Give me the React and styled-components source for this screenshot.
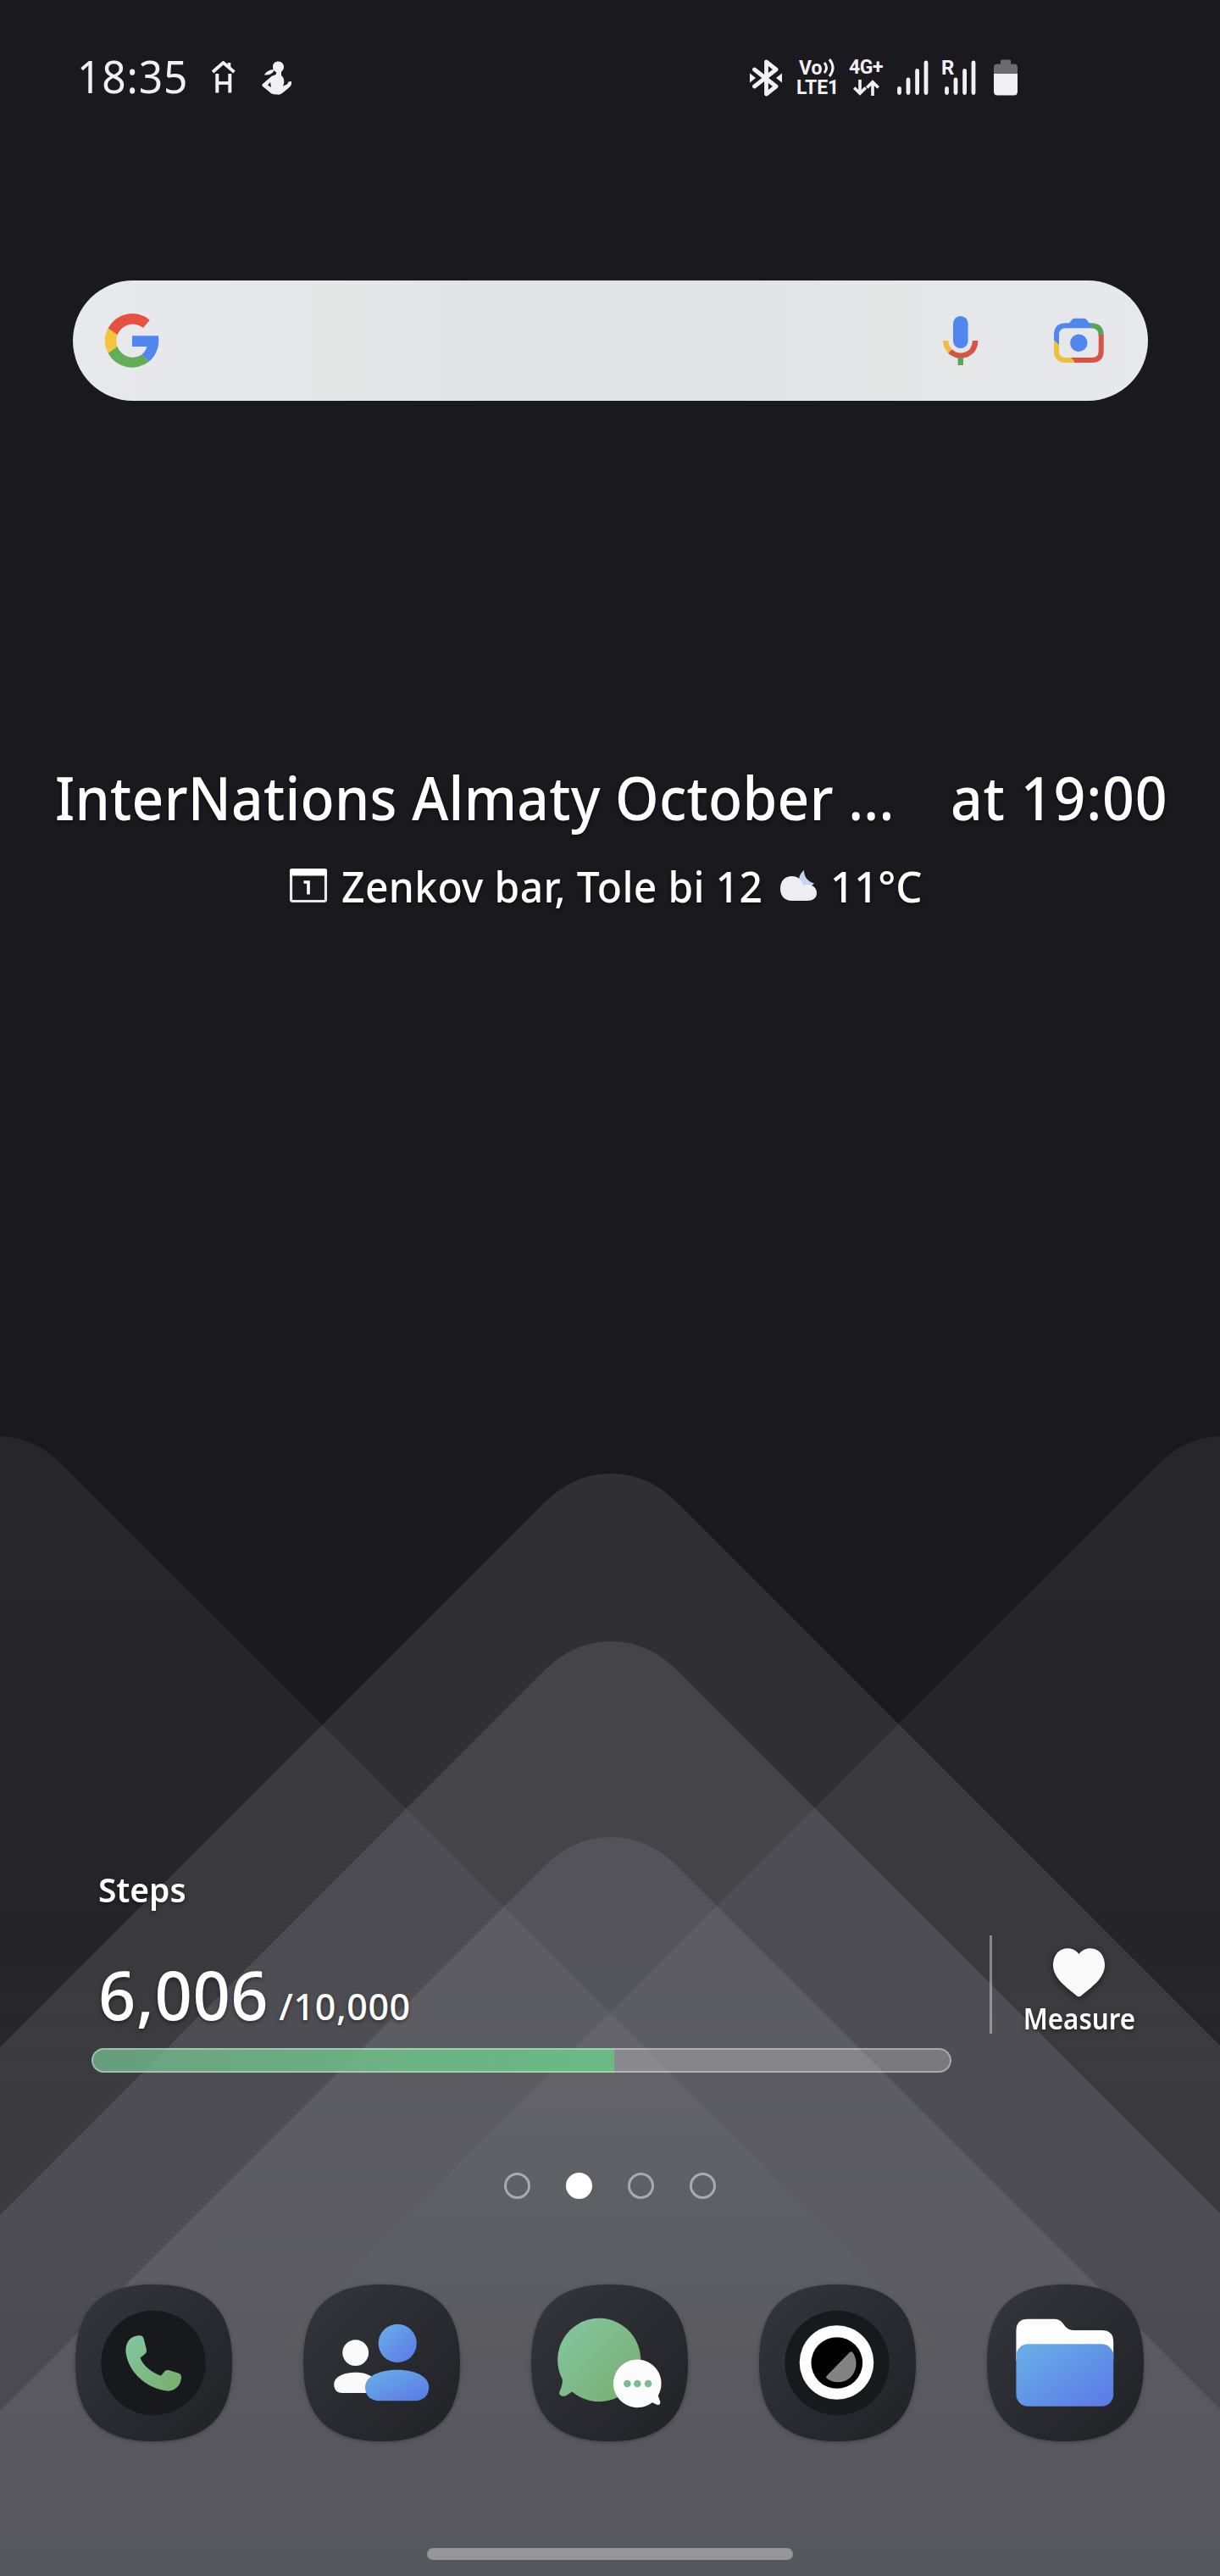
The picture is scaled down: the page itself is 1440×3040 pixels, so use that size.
import React from "react";
import styled, { createGlobalStyle } from "styled-components";

const GlobalStyle = createGlobalStyle`
  html, body { margin: 0; padding: 0; background: #19191e; }
  * { box-sizing: border-box; }
  svg { display: block; flex: none; }
`;

const Screen = styled.main`
  position: relative;
  width: 1440px;
  height: 3040px;
  overflow: hidden;
  color: #fff;
  font-family: "Noto Sans", "Open Sans", sans-serif;
`;

const WallpaperArt = styled.svg`
  position: absolute;
  inset: 0;
  z-index: 0;
`;

const Content = styled.div`
  position: relative;
  z-index: 1;
  display: flex;
  flex-direction: column;
  height: 100%;
`;

const Label = styled.span`
  display: block;
  font-size: ${(p) => p.$size}px;
  font-weight: ${(p) => p.$weight || 500};
  letter-spacing: ${(p) => p.$track || 0}px;
  line-height: 1;
  white-space: pre;
  transform: scaleX(${(p) => p.$narrow || 1});
  transform-origin: ${(p) => p.$origin || "left"} center;
  text-shadow: ${(p) => (p.$flat ? "none" : "0 2px 5px rgba(0, 0, 0, 0.45)")};
`;

const StatusBar = styled.header`
  display: flex;
  justify-content: space-between;
  align-items: center;
  height: 183px;
  padding: 0 239px 0 91px;
`;

const StatusGroup = styled.div`
  display: flex;
  align-items: center;
  color: #f1f0f5;
`;

const Clock = styled(Label)`
  width: 159px;
  margin-top: -3px;
`;

const NetworkLabel = styled.div`
  display: flex;
  flex-direction: column;
  align-items: ${(p) => p.$align || "flex-start"};
  width: ${(p) => p.$width}px;
  margin-left: ${(p) => p.$before}px;
  gap: ${(p) => p.$gap || 0}px;
  font-family: Roboto, sans-serif;
  font-size: 23px;
  font-weight: 700;
  line-height: 23px;
  white-space: nowrap;
`;

const NetworkLine = styled.div`
  display: flex;
  align-items: center;
  height: 23px;
  padding-left: ${(p) => p.$indent || 0}px;
  letter-spacing: ${(p) => p.$track || 0}px;
`;

const SignalBox = styled.div`
  position: relative;
  width: ${(p) => p.$width}px;
  margin-left: ${(p) => p.$before}px;
  display: flex;
  justify-content: flex-end;
`;

const RoamingMark = styled.span`
  position: absolute;
  left: -1px;
  top: -3px;
  font: 700 24px/24px Roboto, sans-serif;
`;

const SearchBar = styled.section`
  display: flex;
  align-items: center;
  width: 1269px;
  height: 142px;
  margin: 148px 0 0 86px;
  padding: 0 52px 0 37px;
  border-radius: 71px;
  background: linear-gradient(90deg, #e8e9ed 0%, #e6e8ea 13%, #e5e7e7 26%, #e1e3e7 38%, #e1e3e7 62%, #e5e7e7 76%, #e6e7eb 90%, #e8e9ed 100%);
`;

const SearchField = styled.div`
  flex: 1;
`;

const IconSlot = styled.div`
  margin-left: ${(p) => p.$before || 0}px;
`;

const EventWidget = styled.section`
  margin-top: 432px;
  display: flex;
  flex-direction: column;
`;

const EventTitle = styled.div`
  display: flex;
  align-items: center;
  justify-content: space-between;
  height: 72px;
  padding: 0 62px 0 65px;
`;

const EventName = styled(Label)`
  width: 1040px;
`;

const EventDetails = styled.div`
  display: flex;
  align-items: center;
  height: 60px;
  margin-top: 38px;
  padding-left: 342px;
`;

const EventPlace = styled(Label)`
  width: 518px;
  margin-left: 17px;
`;

const Temperature = styled(Label)`
  margin-left: 15px;
`;

const HealthWidget = styled.section`
  display: grid;
  grid-template-columns: 1060px 3px 1fr;
  height: 262px;
  margin-top: 1120px;
  padding: 0 73px 0 108px;
`;

const StepsPanel = styled.div`
  display: flex;
  flex-direction: column;
  width: 1015px;
`;

const StepsCaption = styled.div`
  display: flex;
  align-items: center;
  height: 46px;
  margin: 12px 0 0 8px;
`;

const StepsCount = styled.div`
  display: flex;
  align-items: baseline;
  height: 79px;
  margin: 61px 0 0 8px;
`;

const StepsGoal = styled(Label)`
  margin-left: 8px;
`;

const Progress = styled.div`
  height: 29px;
  margin-top: 24px;
  border-radius: 14.5px;
  overflow: hidden;
  position: relative;
  background: rgba(255, 255, 255, 0.25);
`;

const ProgressFill = styled.div`
  width: 617px;
  height: 100%;
  background: linear-gradient(90deg, rgba(100, 182, 130, 0.66), rgba(104, 190, 130, 0.95));
`;

const ProgressRim = styled.div`
  position: absolute;
  inset: 0;
  border: 2px solid rgba(255, 255, 255, 0.36);
  border-radius: inherit;
`;

const Divider = styled.div`
  height: 116px;
  margin-top: 89px;
  background: rgba(255, 255, 255, 0.4);
`;

const MeasurePanel = styled.div`
  display: flex;
  flex-direction: column;
  align-items: center;
  padding: 104px 0 0 9px;
  gap: 8px;
`;

const HeartArt = styled.svg`
  filter: drop-shadow(0 2px 4px rgba(0, 0, 0, 0.45));
`;

const Pager = styled.nav`
  display: flex;
  gap: 42px;
  margin: 107px 0 0 595px;
`;

const PageDot = styled.span`
  width: 31px;
  height: 31px;
  border-radius: 50%;
  border: 3px solid ${(p) => (p.$active ? "#fff" : "rgba(255, 255, 255, 0.47)")};
  background: ${(p) => (p.$active ? "#fff" : "transparent")};
`;

const Dock = styled.nav`
  display: flex;
  gap: 84px;
  margin: 101px 0 0 89px;
`;

const TileArt = styled.svg`
  filter: drop-shadow(0 1px 2px rgba(0, 0, 0, 0.3));
`;

const HomeHandle = styled.div`
  width: 432px;
  height: 14px;
  margin: 126px 0 0 504px;
  border-radius: 7px;
  background: #969696;
`;

const peak = (cx, y) => {
  const r = 77;
  const t = y + 33;
  return `M${cx - 1500} ${t + 1500 - r} L${cx - r} ${t} Q${cx - 43} ${y} ${cx} ${y} Q${cx + 43} ${y} ${cx + r} ${t} L${cx + 1500} ${t + 1500 - r} Z`;
};

function Wallpaper() {
  return (
    <WallpaperArt width="1440" height="3040" viewBox="0 0 1440 3040">
      <defs>
        <linearGradient id="side" gradientUnits="userSpaceOnUse" x1="0" y1="1690" x2="0" y2="2800">
          <stop offset="0" stopColor="#f8f8ff" stopOpacity=".058" />
          <stop offset=".6" stopColor="#f8f8ff" stopOpacity=".05" />
          <stop offset="1" stopColor="#f8f8ff" stopOpacity="0" />
        </linearGradient>
        <linearGradient id="base" gradientUnits="userSpaceOnUse" x1="0" y1="2300" x2="0" y2="3040">
          <stop offset="0" stopColor="#19191e" />
          <stop offset=".5" stopColor="#222227" />
          <stop offset="1" stopColor="#1e1e23" />
        </linearGradient>
      </defs>
      <rect width="1440" height="3040" fill="url(#base)" />
      <path d={peak(-4, 1695)} fill="url(#side)" />
      <path d={peak(1444, 1695)} fill="url(#side)" />
      <path d={peak(721, 1739)} fill="#f8f8ff" fillOpacity=".1" />
      <path d={peak(721, 1937)} fill="#f8f8ff" fillOpacity=".104" />
      <path d={peak(721, 2168)} fill="#f8f8ff" fillOpacity=".09" />
    </WallpaperArt>
  );
}

const HouseIcon = () => (
  <svg width="28" height="39" viewBox="0 0 28 39" fill="none" stroke="currentColor">
    <path d="M1 13 L13.5 2 L26.5 13" strokeWidth="3.8" />
    <path d="M20.5 2 V8" strokeWidth="3.6" />
    <path d="M6.3 15 V37.5 M21.3 15 V37.5" strokeWidth="4" />
    <path d="M6.3 26 H21.3" strokeWidth="3.8" />
  </svg>
);

const PersonIcon = () => (
  <svg width="36" height="40" viewBox="0 0 36 40" fill="currentColor">
    <path d="M13 7 C13 2.5 16 .5 19.5 .5 C23.5 .5 26 3.5 26 7 C26 11 23 13.5 19.8 13.5 C15.5 13.5 13 11 13 7Z" />
    <path d="M14 10 C9 10 4.5 13 3 16.5 C7.5 17 12 15.5 14 12Z" />
    <path d="M17 12 H23 V17 C27 20 27 26 25 29.5 L30 27.5 L31.5 24.5 L35 24 C35.5 27 34.5 29.5 32 31.5 L26 36.5 C23.5 39 21 40 18 39.5 C13 39.8 10 38 8.500 36 L.5 29.5 L.5 27.5 L11 18.5 C13 16.5 17 17 17 15Z" />
    <path d="M10 25 L7 28.5 L11 31 Z" fill="#19191e" />
  </svg>
);

const BluetoothIcon = () => (
  <svg width="38" height="44" viewBox="0 0 38 44" fill="none" stroke="currentColor" strokeWidth="4.800" strokeLinejoin="round" strokeLinecap="round">
    <path d="M5.500 12 L31 32 L19.500 41 V3 L31 12 L5.500 32" />
    <path d="M0 16.500 L7 22 L0 27.500Z M38 16.500 L31 22 L38 27.500Z" fill="currentColor" stroke="none" />
  </svg>
);

const VoiceWaves = () => (
  <svg width="15" height="22" viewBox="0 0 15 22" fill="none" stroke="currentColor" strokeWidth="3">
    <path d="M2 5 Q7 11 2 17 M8 1 Q16 11 8 21" />
  </svg>
);

const DataArrows = () => (
  <svg width="31" height="19" viewBox="0 0 31 19" fill="none" stroke="currentColor" strokeWidth="3.600">
    <path d="M8 0 V16 M1.200 9.500 L8 16.300 L14.800 9.500 M23 19 V3 M16.200 9.500 L23 2.700 L29.800 9.500" />
  </svg>
);

const SignalIcon = () => (
  <svg width="37" height="41" viewBox="0 0 37 41" stroke="currentColor" strokeWidth="4.800" strokeLinecap="round">
    <path d="M2.500 33.500 V38.500 M13 23 V38.500 M23.600 12.500 V38.500 M34 3 V38.500" />
  </svg>
);

const BatteryIcon = () => (
  <svg width="28" height="43" viewBox="0 0 28 43">
    <path d="M8 2 Q8 .5 9.500 .5 H18.500 Q20 .5 20 2 V5.500 H24 Q28 5.500 28 9.500 V17 H0 V9.500 Q0 5.500 4 5.500 H8Z" fill="#6c6b70" />
    <path d="M0 17 H28 V38 Q28 42.500 23.500 42.500 H4.500 Q0 42.500 0 38Z" fill="#f0f0f2" />
  </svg>
);

const GoogleIcon = () => (
  <svg width="65" height="66" viewBox="-33 -33 65 66">
    <path d="M20.700 -24.300 A32 32 0 0 0 -28.500 -14.500 L-17.500 -6.700 A19.300 19.300 0 0 1 13 -15Z" fill="#e5523f" />
    <path d="M-28.500 -14.500 A32 32 0 0 0 -28.500 14.700 L-17.500 7 A19.300 19.300 0 0 1 -17.500 -6.700Z" fill="#f7c33c" />
    <path d="M-28.500 14.700 A32.200 32.200 0 0 0 19.800 24.700 L11.300 16.400 A19.300 19.300 0 0 1 -17.500 7Z" fill="#63ac58" />
    <path d="M0 -5.700 H31 C32.500 6 29 17 19.800 24.700 L11.300 16.400 Q16 12.500 17.400 7 H0Z" fill="#5186ee" />
  </svg>
);

const MicIcon = () => (
  <svg width="42" height="60" viewBox="0 0 42 60" fill="none" strokeWidth="6.400">
    <rect x="12" y="1" width="17.600" height="38" rx="8.800" fill="#5186ee" />
    <path d="M3.300 30 C3.300 35 5 39.500 8.500 42.500" stroke="#eebf3f" />
    <path d="M8.500 42.500 C16 50 28 49 34.500 41.500 Q38.200 36.500 38.200 30" stroke="#d65346" />
    <path d="M20.800 50 V59" stroke="#5aa557" />
  </svg>
);

const LensIcon = () => (
  <svg width="59" height="54" viewBox="0 0 59 54" fill="none" strokeWidth="6">
    <path d="M3 28 V20.300 Q3 9.300 14 9.300 H45" stroke="#5186ee" />
    <path d="M15 10 L21.700 1.700 Q22.700 .7 24 .7 H35.500 Q37 .7 38 1.700 L45 10Z" fill="#5186ee" />
    <path d="M44 9.300 Q55.700 9.300 55.700 21" stroke="#57a457" />
    <path d="M55.700 20 V39 Q55.700 50 44.700 50 H24" stroke="#d65346" />
    <path d="M3 27 V39 Q3 50 14 50 H24" stroke="#eebf3f" />
    <path d="M0 22 H6 V32 L0 26Z" fill="#5186ee" />
    <path d="M20 47 H26 V53Z" fill="#d65346" />
    <circle cx="29.300" cy="29.700" r="10.200" fill="#5186ee" />
  </svg>
);

const CalendarIcon = () => (
  <svg width="44" height="40" viewBox="0 0 44 40">
    <rect x="1.500" y="1.500" width="41" height="37" rx="2" fill="none" stroke="#e8e7ec" strokeWidth="3.200" />
    <path d="M0 2.500 Q0 0 2.500 0 H41.500 Q44 0 44 2.500 V8.500 H0Z" fill="#fff" />
    <path d="M16.500 16 H22 V30.500" fill="none" stroke="#fff" strokeWidth="3.600" />
  </svg>
);

const CloudIcon = () => (
  <svg width="44" height="37" viewBox="0 0 44 37">
    <path d="M28 0 C28 8 32 13 40 15.500 C36 21 27 21 23 15 C21 9 23 4 28 0Z" fill="#c5d3f5" />
    <path d="M14 36 C4 36 0 29 0 22 C0 12 6 7 13.500 7 C21 7 25.500 11.500 27.500 18 C36 15 43 20 43 27 C43 33 38 36 32 36Z" fill="#eeeef0" />
  </svg>
);

const HeartIcon = () => (
  <HeartArt width="61" height="58" viewBox="0 0 61 58">
    <path d="M30.500 7 C26 1.500 21 .3 17 .3 C6 .3 0 10 0 20 C0 36 17 47 27.500 56 Q30.500 58.500 33.500 56 C44 47 61 36 61 20 C61 10 55 .3 44 .3 C40 .3 35 1.500 30.500 7Z" fill="#fafafa" />
  </HeartArt>
);

function Tile({ children }) {
  return (
    <TileArt width="185" height="185" viewBox="0 0 186 186">
      <defs>
        <linearGradient id="tile" x1="0" y1="0" x2="1" y2="1">
          <stop offset="0" stopColor="#36373d" />
          <stop offset=".5" stopColor="#2a2b30" />
          <stop offset="1" stopColor="#212226" />
        </linearGradient>
        <linearGradient id="green" x1="0" y1="0" x2="1" y2="1">
          <stop offset="0" stopColor="#83c8a2" />
          <stop offset="1" stopColor="#79ac6d" />
        </linearGradient>
        <linearGradient id="blue" x1="0" y1="0" x2="1" y2="1">
          <stop offset="0" stopColor="#69b0e8" />
          <stop offset="1" stopColor="#5b78e6" />
        </linearGradient>
      </defs>
      <path d="M93 0 C157 0 186 29 186 93 C186 157 157 186 93 186 C29 186 0 157 0 93 C0 29 29 0 93 0Z" fill="url(#tile)" />
      {children}
    </TileArt>
  );
}

const PhoneTile = () => (
  <Tile>
    <circle cx="92.500" cy="93" r="62" fill="#17191d" />
    <path d="M74 60.700 C78 60 80 61 81 64 L84.300 77 C85 80 83.500 82 82 83 L77 87 C80 96 90 104 101.500 108.300 L105 104 C107 101.500 109.500 101.200 112 102 L122 105 C125 106 126 108 125.600 111 C125 116 123.500 119.500 120 122.500 C116 126 111.500 127 106.500 126 C82 122 62 102 59.800 80 C59.300 70 64 62 74 60.700Z" fill="url(#green)" />
  </Tile>
);

const ContactsTile = () => (
  <Tile>
    <circle cx="62" cy="81" r="15.500" fill="#fafafa" />
    <path d="M46 128.700 C40 128.700 36.400 125 36.400 118.500 C36.400 109 49 104.300 62 104.300 C74 104.300 86 109 86 118 L84 128.700Z" fill="#fafafa" />
    <circle cx="111.800" cy="69.800" r="22.700" fill="url(#blue)" />
    <path d="M90 138 C80 138 73.400 132 73.400 122 C73.400 108 92 101.300 111.500 101.300 C131 101.300 149 108 149 122 C149 132 142 138 133 138Z" fill="url(#blue)" />
  </Tile>
);

const MessagesTile = () => (
  <Tile>
    <path d="M80 40 A49.500 49.500 0 1 1 48.500 127.300 L42.500 131.300 C38.500 134 32 132 33.500 127.500 C36 122 37.500 117 37 112.500 A49.500 49.500 0 0 1 80 40Z" fill="url(#green)" />
    <path d="M126.200 89 A28.500 28.500 0 0 1 150.600 131.700 L153 139 C153.500 142 152 143.200 149 142.500 L143.500 140 A28.500 28.500 0 1 1 126.200 89Z" fill="#fbfbfc" />
    <circle cx="114" cy="117.700" r="4.300" fill="#7cbd90" />
    <circle cx="126" cy="117.700" r="4.300" fill="#7cbd90" />
    <circle cx="138.800" cy="117.700" r="4.300" fill="#7cbd90" />
  </Tile>
);

const CameraTile = () => (
  <Tile>
    <circle cx="92.500" cy="93" r="62" fill="#17191d" />
    <circle cx="92" cy="92.500" r="44" fill="#fdfdfd" />
    <circle cx="92.300" cy="93" r="30.500" fill="#000" />
    <path d="M107.500 80.500 Q109.800 78.500 111.300 81 C118 91 115.500 104.500 107.500 111 C98.500 118 88 117 80.500 111.500 Q78.500 110 80.500 108Z" fill="#828282" />
  </Tile>
);

const FilesTile = () => (
  <Tile>
    <path d="M34.600 90 V55 Q34.600 41 48.600 41 H80 Q86 41 90 46 L93 50 Q97 54.300 103 54.300 H136 Q150 54.300 150 68 V90Z" fill="#fdfdfd" />
    <rect x="34.600" y="70.700" width="115.400" height="73.800" rx="14" fill="url(#blue)" />
  </Tile>
);

export default function App() {
  return (
    <Screen>
      <GlobalStyle />
      <Wallpaper />
      <Content>
        <StatusBar>
          <StatusGroup>
            <Clock $size={52} $weight={450} $track={0.9} $narrow={0.955} $flat>18:35</Clock>
            <HouseIcon />
            <IconSlot $before={31}><PersonIcon /></IconSlot>
          </StatusGroup>
          <StatusGroup>
            <BluetoothIcon />
            <NetworkLabel $width={50} $before={17}>
              <NetworkLine $indent={3}>Vo<VoiceWaves /></NetworkLine>
              <NetworkLine>LTE1</NetworkLine>
            </NetworkLabel>
            <NetworkLabel $width={42} $before={11} $align="center" $gap={1}>
              <NetworkLine $track={-0.5}>4G+</NetworkLine>
              <NetworkLine><DataArrows /></NetworkLine>
            </NetworkLabel>
            <SignalBox $width={37} $before={16}><SignalIcon /></SignalBox>
            <SignalBox $width={40} $before={16}>
              <RoamingMark>R</RoamingMark>
              <SignalIcon />
            </SignalBox>
            <IconSlot $before={21}><BatteryIcon /></IconSlot>
          </StatusGroup>
        </StatusBar>

        <SearchBar>
          <GoogleIcon />
          <SearchField />
          <IconSlot><MicIcon /></IconSlot>
          <IconSlot $before={89}><LensIcon /></IconSlot>
        </SearchBar>

        <EventWidget>
          <EventTitle>
            <EventName $size={70} $track={0.3} $narrow={0.94}>InterNations Almaty October ...</EventName>
            <Label $size={70} $track={0.9} $narrow={0.945} $origin="right">at 19:00</Label>
          </EventTitle>
          <EventDetails>
            <CalendarIcon />
            <EventPlace $size={51} $track={0.4} $narrow={0.94}>Zenkov bar, Tole bi 12</EventPlace>
            <CloudIcon />
            <Temperature $size={51} $narrow={0.965}>11°C</Temperature>
          </EventDetails>
        </EventWidget>

        <HealthWidget>
          <StepsPanel>
            <StepsCaption><Label $size={40} $weight={600} $narrow={0.975}>Steps</Label></StepsCaption>
            <StepsCount>
              <Label $size={79} $track={0.6} $narrow={0.98}>6,006</Label>
              <StepsGoal $size={43} $track={0.6}>/10,000</StepsGoal>
            </StepsCount>
            <Progress>
              <ProgressFill />
              <ProgressRim />
            </Progress>
          </StepsPanel>
          <Divider />
          <MeasurePanel>
            <HeartIcon />
            <Label $size={34} $weight={600} $narrow={0.92} $origin="center">Measure</Label>
          </MeasurePanel>
        </HealthWidget>

        <Pager>
          <PageDot />
          <PageDot $active />
          <PageDot />
          <PageDot />
        </Pager>

        <Dock>
          <PhoneTile />
          <ContactsTile />
          <MessagesTile />
          <CameraTile />
          <FilesTile />
        </Dock>

        <HomeHandle />
      </Content>
    </Screen>
  );
}
